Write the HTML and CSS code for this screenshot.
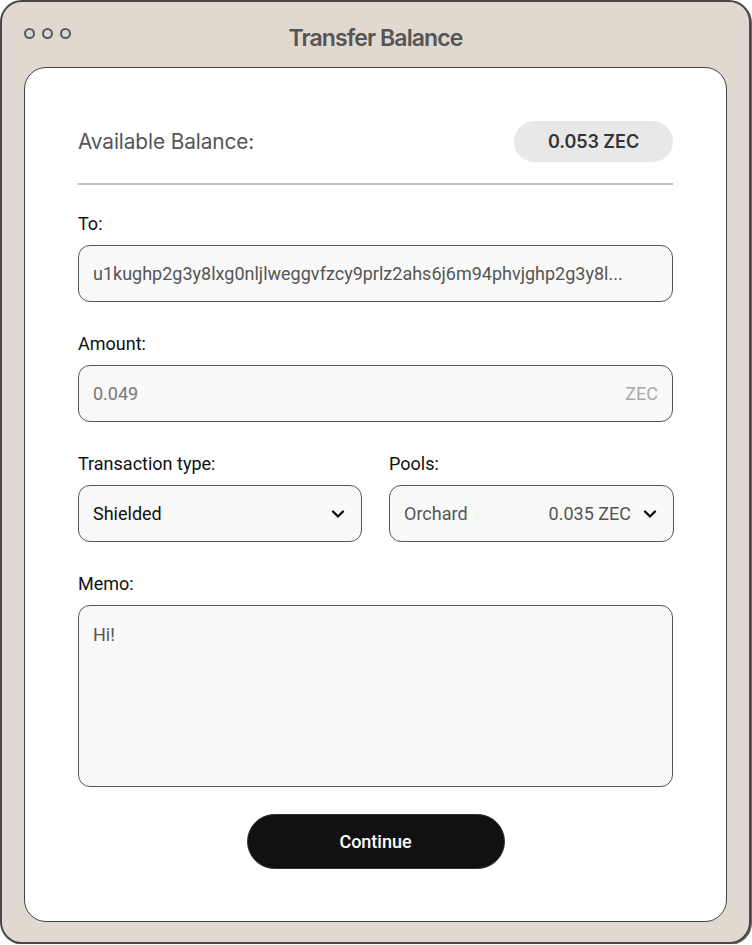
FILE: index.html
```html
<!DOCTYPE html>
<html lang="en">
<head>
<meta charset="utf-8">
<title>Transfer Balance</title>
<link rel="stylesheet" href="styles.css">
</head>
<body>
<div class="window">
  <header class="titlebar">
    <div class="dots"><span class="dot"></span><span class="dot"></span><span class="dot"></span></div>
    <h1 class="title">Transfer Balance</h1>
  </header>
  <main class="card">
    <div class="balance-row">
      <span class="balance-label">Available Balance:</span>
      <span class="balance-pill">0.053 ZEC</span>
    </div>
    <div class="divider"></div>
    <div class="field">
      <div class="label">To:</div>
      <div class="input"><span class="value">u1kughp2g3y8lxg0nljlweggvfzcy9prlz2ahs6j6m94phvjghp2g3y8l...</span></div>
    </div>
    <div class="field">
      <div class="label">Amount:</div>
      <div class="input"><span class="value muted">0.049</span><span class="unit">ZEC</span></div>
    </div>
    <div class="field-row">
      <div class="field">
        <div class="label">Transaction type:</div>
        <div class="input select"><span class="value dark">Shielded</span>
          <svg class="chev" width="14" height="10" viewBox="0 0 14 10"><path d="M2 2.5 L7 7.5 L12 2.5" fill="none" stroke="#111" stroke-width="2.4" stroke-linecap="round" stroke-linejoin="round"/></svg>
        </div>
      </div>
      <div class="field">
        <div class="label">Pools:</div>
        <div class="input select"><span class="value">Orchard</span><span class="pool-amt">0.035 ZEC</span>
          <svg class="chev chev-after" width="14" height="10" viewBox="0 0 14 10"><path d="M2 2.5 L7 7.5 L12 2.5" fill="none" stroke="#111" stroke-width="2.4" stroke-linecap="round" stroke-linejoin="round"/></svg>
        </div>
      </div>
    </div>
    <div class="field memo-field">
      <div class="label">Memo:</div>
      <div class="input memo"><span class="value">Hi!</span></div>
    </div>
    <div class="actions">
      <button class="btn">Continue</button>
    </div>
  </main>
</div>
</body>
</html>
```
FILE: styles.css
```css
* { box-sizing: border-box; }
html, body { margin: 0; padding: 0; background: #ffffff; }
body { font-family: Roboto, "Liberation Sans", sans-serif; }

.window {
  width: 751px;
  height: 944px;
  background: #e1d9d0;
  border: 2px solid #474747;
  border-radius: 22px;
  box-shadow: 1px 1px 0 #666;
  display: flex;
  flex-direction: column;
  padding: 0 22px 20px 22px;
}

.titlebar {
  height: 65px;
  display: flex;
  align-items: center;
  justify-content: center;
  position: relative;
}
.dots {
  position: absolute;
  left: 0;
  top: 26px;
  display: flex;
  gap: 7px;
}
.dot {
  width: 11px;
  height: 11px;
  border-radius: 50%;
  background: #d8d8d8;
  border: 2px solid #5a5a5a;
}
.title {
  margin: 0;
  padding-top: 7px;
  font-family: Inter, sans-serif;
  font-weight: 600;
  font-size: 23px;
  letter-spacing: -0.9px;
  color: #555555;
}

.card {
  flex: 1;
  background: #ffffff;
  border: 1px solid #444;
  border-radius: 22px;
  padding: 53px 53px 0 53px;
  display: flex;
  flex-direction: column;
}

.balance-row {
  display: flex;
  justify-content: space-between;
  align-items: center;
  height: 41px;
}
.balance-label {
  font-family: Inter, sans-serif;
  font-size: 20.8px;
  color: #555;
  letter-spacing: -0.1px;
}
.balance-pill {
  width: 159px;
  height: 41px;
  border-radius: 21px;
  background: #e8e8e8;
  display: flex;
  align-items: center;
  justify-content: center;
  font-family: Inter, sans-serif;
  font-weight: 600;
  font-size: 18px;
  letter-spacing: -0.05px;
  color: #333;
}
.divider {
  height: 2px;
  background: #bdbdbd;
  margin-top: 21px;
  margin-bottom: 29px;
}

.field { display: flex; flex-direction: column; margin-bottom: 32px; }
.label {
  font-size: 18px;
  line-height: 20px;
  color: #111;
  margin-bottom: 11px;
}
.input {
  height: 57px;
  border: 1px solid #555;
  border-radius: 12px;
  background: #f9f9f9;
  display: flex;
  align-items: center;
  padding: 0 14px;
  font-size: 18px;
  color: #555;
}
.value { white-space: nowrap; }
.muted { color: #777; }
.dark { color: #111; }
.unit { margin-left: auto; color: #aaa; }

.field-row {
  display: grid;
  grid-template-columns: 284px 285px;
  column-gap: 27px;
}
.select { padding-right: 16px; }
.select .chev { margin-left: auto; }
.select .chev-after { margin-left: 12px; }
.pool-amt { margin-left: auto; color: #555; }
.field-row .field { margin-bottom: 32px; }

.memo {
  height: 182px;
  align-items: flex-start;
  padding-top: 18px;
}
.memo-field { margin-bottom: 27px; }

.actions { display: flex; justify-content: center; }
.btn {
  width: 258px;
  height: 55px;
  border: 1px solid #333;
  border-radius: 28px;
  background: #111;
  color: #fff;
  font-family: Roboto, sans-serif;
  font-weight: 500;
  font-size: 18px;
}
```
